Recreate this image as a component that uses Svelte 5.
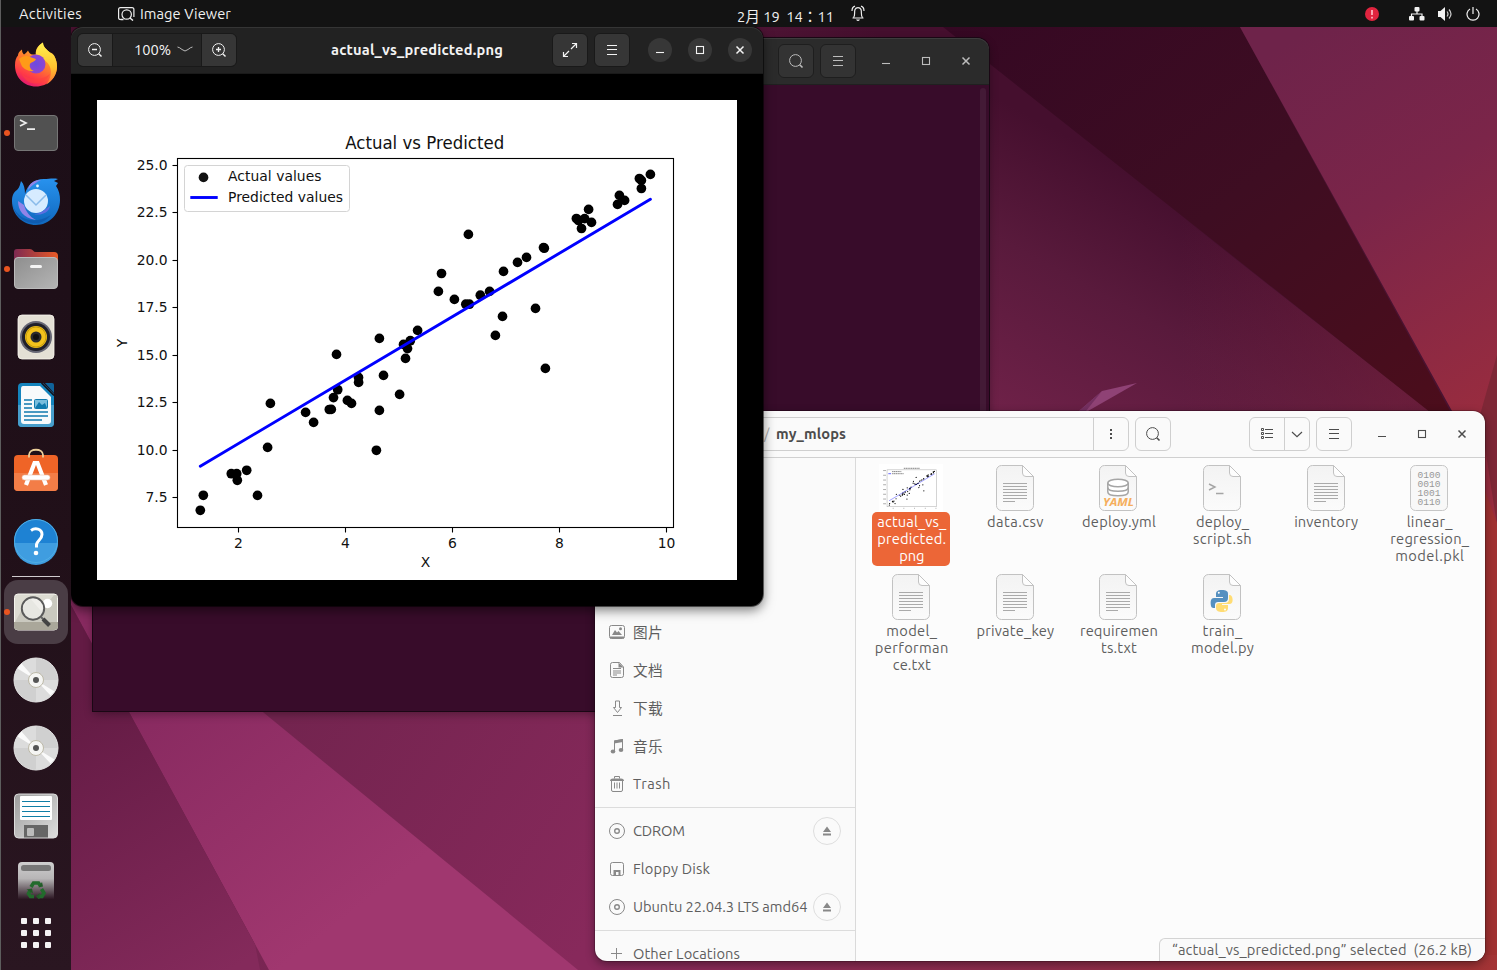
<script>
  const points = [
    [200.3, 510.3], [203.3, 495.3], [231.3, 473.7], [236.7, 473.7], [237.3, 480.3], [246.7, 470.3],
    [257.5, 495.4], [267.6, 447.4], [270.4, 403.4], [305.6, 412.4], [313.6, 422.4], [329.3, 409.5],
    [331.3, 409.4], [333.5, 397.6], [337.7, 389.7], [336.5, 354.4], [347.4, 400.4], [351.5, 403.4],
    [358.5, 377.4], [358.6, 382.4], [376.4, 450.3], [379.4, 410.4], [383.5, 375.4], [399.6, 394.4],
    [405.5, 358.4], [407.5, 348.6], [403.5, 344.4], [379.4, 338.4], [410.3, 340.7], [417.6, 330.4],
    [468.4, 234.4], [441.5, 273.5], [438.4, 291.4], [454.4, 299.4], [465.8, 304.2], [469.4, 304.2],
    [480.3, 295.2], [489.6, 291.4], [503.5, 271.4], [517.5, 262.4], [526.5, 257.4], [543.5, 247.6],
    [544.3, 248.2], [495.4, 335.4], [502.5, 316.4], [535.5, 308.4], [545.4, 368.4], [576.4, 218.5],
    [578.5, 220.5], [584.6, 218.6], [588.6, 209.4], [591.5, 222.4], [581.5, 228.5], [617.5, 204.4],
    [619.4, 195.4], [624.6, 200.4], [639.4, 178.5], [641.4, 180.4], [641.4, 188.5], [650.4, 174.4]
  ];
  const xTicks = [[2, 238.5], [4, 345.5], [6, 452.5], [8, 559.5], [10, 666.5]];
  const yTicks = [
    ['25.0', 165.5], ['22.5', 212.5], ['20.0', 260.5], ['17.5', 307.5],
    ['15.0', 355.5], ['12.5', 402.5], ['10.0', 450.5], ['7.5', 497.5]
  ];

  // Each label line carries its advance width in pixels.
  const files = [
    { kind: 'thumb', selected: true, lines: [['actual_vs_', 69], ['predicted.', 69], ['png', 25]] },
    { kind: 'text', lines: [['data.csv', 57]] },
    { kind: 'yaml', lines: [['deploy.yml', 74]] },
    { kind: 'shell', lines: [['deploy_', 53], ['script.sh', 59]] },
    { kind: 'text', lines: [['inventory', 64]] },
    { kind: 'binary', lines: [['linear_', 46], ['regression_', 79], ['model.pkl', 69]] },
    { kind: 'text', lines: [['model_', 51], ['performan', 74], ['ce.txt', 38]] },
    { kind: 'text', lines: [['private_key', 78]] },
    { kind: 'text', lines: [['requiremen', 78], ['ts.txt', 36]] },
    { kind: 'python', lines: [['train_', 40], ['model.py', 63]] }
  ];

  const places = [
    [
      { icon: 'picture', label: '图片', width: 30, cjk: true },
      { icon: 'document', label: '文档', width: 30, cjk: true },
      { icon: 'download', label: '下载', width: 30, cjk: true },
      { icon: 'music', label: '音乐', width: 30, cjk: true },
      { icon: 'trash', label: 'Trash', width: 38 }
    ],
    [
      { icon: 'disc', label: 'CDROM', width: 52, eject: true },
      { icon: 'floppy', label: 'Floppy Disk', width: 77 },
      { icon: 'disc', label: 'Ubuntu 22.04.3 LTS amd64', width: 174.5, eject: true }
    ],
    [{ icon: 'plus', label: 'Other Locations', width: 107 }]
  ];

  const dockTop = ['firefox', 'terminal', 'thunderbird', 'files', 'music', 'writer', 'software', 'help'];
  const dockBottom = ['viewer', 'disc', 'disc', 'floppy'];
  const running = ['terminal', 'files', 'viewer'];

  // Tracks a label so that it occupies the given width.
  function fit(node, width) {
    const natural = node.getBoundingClientRect().width;
    node.style.letterSpacing = `${(width - natural) / [...node.textContent].length}px`;
  }
</script>

{#snippet chart(small)}
  <rect x="97" y="100" width="640" height="480" fill="#fff" />
  {#each points as [x, y]}
    <circle cx={x} cy={y} r={small ? 6 : 4.85} />
  {/each}
  <path d="M200.3 466.2 650.4 199.3" stroke="#00f" stroke-width={small ? 6 : 2.9} stroke-linecap="round" opacity={small ? 0.6 : 1} />
  <rect x="177.5" y="158.5" width="496" height="369" fill="none" stroke={small ? '#aaa' : '#000'} stroke-width={small ? 5 : 1.1} />
  {#if small}
    <path d="M345 143H504M228 176H321M228 197H343" stroke="#777" stroke-width="9" stroke-dasharray="14 4" />
    <path d="M190 197H218" stroke="#00f" stroke-width="6" />
    {#each yTicks as [, y]}<path d={`M138 ${y}h29`} stroke="#999" stroke-width="8" />{/each}
    {#each xTicks as [, x]}<path d={`M${x - 4} 543h8`} stroke="#999" stroke-width="9" />{/each}
  {:else}
    <g class="plot-text">
      <text class="plot-title" x="424.7" y="149" text-anchor="middle" textLength="159" lengthAdjust="spacingAndGlyphs">Actual vs Predicted</text>
      {#each xTicks as [n, x]}
        <path d={`M${x} 528v4.5`} stroke="#000" stroke-width="1.1" />
        <text {x} y="548" text-anchor="middle">{n}</text>
      {/each}
      {#each yTicks as [n, y]}
        <path d={`M172.5 ${y}h4.5`} stroke="#000" stroke-width="1.1" />
        <text x="167.6" y={y + 4.7} text-anchor="end">{n}</text>
      {/each}
      <text x="425.5" y="567" text-anchor="middle">X</text>
      <text transform="translate(127 343) rotate(-90)" text-anchor="middle">Y</text>
      <rect x="184.5" y="165.5" width="165" height="46" rx="3" fill="#fff" stroke="#d4d4d4" />
      <circle cx="203.5" cy="177.4" r="4.85" />
      <path d="M190.3 197.5h27.4" stroke="#00f" stroke-width="2.9" />
      <text x="228" y="181" textLength="93.5">Actual values</text>
      <text x="228" y="202" textLength="115">Predicted values</text>
    </g>
  {/if}
{/snippet}

{#snippet glyph(name)}
  <svg class="glyph" width="16" height="16" viewBox="0 0 16 16" fill="none" stroke="currentColor">
    {#if name === 'search'}
      <circle cx="7.5" cy="7.5" r="5.9" /><path d="M11.7 11.7 14.5 14.5" stroke-width="1.6" />
    {:else if name === 'zoom-out'}
      <circle cx="7.5" cy="7.5" r="5.9" /><path d="M11.7 11.7 14.5 14.5" stroke-width="1.4" /><path d="M5 7.5h5" stroke-width="1.3" />
    {:else if name === 'zoom-in'}
      <circle cx="7.5" cy="7.5" r="5.9" /><path d="M11.7 11.7 14.5 14.5" stroke-width="1.4" /><path d="M5 7.5h5M7.5 5v5" stroke-width="1.3" />
    {:else if name === 'menu'}
      <path d="M3 3.5h10M3 7.5h10M3 12.5h10" />
    {:else if name === 'expand'}
      <path d="M10 1.5h4.5V6M14.5 1.5 9 7M6 14.5H1.5V10M1.5 14.5 7 9" stroke-width="1.2" />
    {:else if name === 'minimize'}
      <path d="M4 10.5h8" stroke-width="1.1" />
    {:else if name === 'maximize'}
      <rect x="4.5" y="4.5" width="7" height="7" stroke-width="1.1" />
    {:else if name === 'close'}
      <path d="m4.5 4.5 7 7m0-7-7 7" stroke-width="1.5" />
    {:else if name === 'dots'}
      <path d="M8 3v2M8 7v2M8 11v2" stroke-width="2" />
    {:else if name === 'list'}
      <path d="M2.5 2.5h2v2h-2zM2.5 6.5h2v2h-2zM2.5 10.5h2v2h-2zM6 3.5h8M6 7.5h8M6 11.5h8" />
    {:else if name === 'chevron'}
      <path d="m3 6 5 4.6L13 6" stroke-width="1.2" />
    {:else if name === 'picture'}
      <rect x=".5" y="1.5" width="15" height="13" rx="2" /><path d="M1 13.5h14" stroke-width="2" />
      <path d="M3 11 6 6l2 2.5L9.5 7 13 11z" fill="currentColor" stroke="none" /><circle cx="11.5" cy="4.8" r="1.5" fill="currentColor" stroke="none" />
    {:else if name === 'document'}
      <path d="M10.5.5h-7a2 2 0 0 0-2 2v11a2 2 0 0 0 2 2h9a2 2 0 0 0 2-2V5zM4 6.5h8M4 9h8M4 11h8M4 13h4" /><path d="M9.5.5V5.5h5z" fill="currentColor" stroke="none" />
    {:else if name === 'download'}
      <path d="M6.5 1h4v6.5h2L8.5 12.5 4.5 7.5h2zM4 15.500h9" />
    {:else if name === 'music'}
      <path d="M5.5 13V3L13.5 1.500V11.500" /><path d="M5 2.500 14 1v3L5 5.500z" fill="currentColor" stroke="none" />
      <g fill="currentColor" stroke="none"><ellipse cx="4" cy="13.5" rx="2.3" ry="2" /><ellipse cx="12" cy="12" rx="2.3" ry="2" /></g>
    {:else if name === 'trash'}
      <path d="M2.5 5v9a1.500 1.500 0 0 0 1.500 1.500h8a1.500 1.500 0 0 0 1.500-1.500V5M5.500 6.500v6M8 6.500v6M10.500 6.500v6M5.500 2.500v-2h5v2" /><path d="M1 5q0-2.500 3-2.500h8q3 0 3 2.500z" fill="currentColor" stroke="none" />
    {:else if name === 'disc'}
      <circle cx="8" cy="8" r="7.5" /><circle cx="8" cy="8" r="2.3" stroke-width="1.4" />
    {:else if name === 'floppy'}
      <rect x="1.5" y="1.5" width="13" height="13" rx="2" /><path d="M4.500 15V9h7v6H9.500v-4H7v4z" fill="currentColor" stroke="none" />
    {:else if name === 'plus'}
      <path d="M7.5 2v11M2 7.500h11" />
    {:else if name === 'eject'}
      <path d="M8 3.500 12 9H4zM4 10.500h8v2H4z" fill="currentColor" stroke="none" />
    {/if}
  </svg>
{/snippet}

{#snippet windowControls()}
  <span class="control">{@render glyph('minimize')}</span>
  <span class="control">{@render glyph('maximize')}</span>
  <span class="control">{@render glyph('close')}</span>
{/snippet}

{#snippet dockIcon(name)}
  {#if name === 'firefox'}
    <path d="M36 55.500c-12 0-21-9-21-21 0-5 1-8 3-10 0-2 1-4 4-6 0 3 1 4 2 5 2-1 3-3 4-4 1 2 2 4 5 4h3c-1-5 2-9 7-12 0 5 4 7 7 10 1 0 3 1 4 3 2 4 3 7 3 11 0 11-9 20-21 20z" fill="url(#ff)" />
    <path d="M43 11.500c0 5 4 7 7 10l4 3c2 4 3 7 3 11 0 8-5 15-11 18 5-5 7-15 2-21-3-4-7-5-12-7-1-6 2-11 7-14z" fill="url(#ffy)" />
    <circle cx="36" cy="33" r="9.5" fill="url(#ffp)" />
    <path d="M19 28c3-3 8-4 11-2 2 1 4 1 6 2-1 3-5 3-6 5-1 3 1 6 4 7-6 1-12-3-13-7z" fill="#ff9a18" />
    <path d="M21 41c5 8 20 10 29 2-7 13-24 13-29-2z" fill="#ff423d" opacity=".55" />
  {:else if name === 'terminal'}
    <rect x="14.5" y="16.5" width="43" height="35" rx="3.5" fill="#515151" stroke="#767676" />
    <path d="m20 21 6 3-6 3M27 30.200h8" fill="none" stroke="#eee" stroke-width="1.7" />
  {:else if name === 'thunderbird'}
    <g transform="translate(0 1)">
      <path d="M12 33c0-6 2-9 5-11 3-3 3-6 4-9 3 3 4 8 4 13 2-8 8-15 19-15 5 0 9-1 14 0l-4 2 4 2-2 3c3 4 4 9 4 14 0 14-11 25-24 25S12 47 12 33z" fill="url(#tb)" />
      <path d="M13 37c4 15 22 20 38 10-7 8-13 9-19 8-11-1-18-10-19-18z" fill="#0d52a5" opacity=".6" />
      <path d="M18 33c0 9 5 17 18 19-6-3-10-8-12-15M28 22c1-7 6-10 13-10-5 2-9 5-13 10z" fill="#9184e8" />
      <circle cx="36" cy="33" r="12" fill="#d6ebff" /><path d="M26 27 36 37 46 27" fill="none" stroke="#8abbea" stroke-width="1.5" />
      <path d="M50 38c-1 7-10 10-16 8 7 0 11-5 16-8z" fill="#5d6ee0" /><circle cx="37.5" cy="18" r="1.4" fill="#e4f7ff" />
    </g>
  {:else if name === 'files'}
    <path d="M14 21V17q0-3 3-3h13q2 0 3 1.500 1 1.500 3 1.500h18q4 0 4 4v16H14z" fill="url(#folder)" />
    <rect x="14.5" y="22.5" width="43" height="31" rx="3.5" fill="url(#metal)" stroke="#bbb" /><rect x="30" y="30" width="12" height="3" rx="1.5" fill="#f4f4f4" />
  {:else if name === 'music'}
    <rect x="18" y="12" width="36" height="44" rx="4" fill="#e4e0d5" stroke="#faf8f0" stroke-width=".8" /><circle cx="36" cy="34" r="16" fill="#666674" />
    <circle cx="36" cy="34" r="14" fill="#20202a" /><circle cx="36" cy="34" r="11" fill="#f3c21c" /><circle cx="36" cy="34" r="10" fill="none" stroke="#c79d0b" /><circle cx="36" cy="34" r="5.5" fill="#2b2b2e" /><circle cx="36" cy="34" r="3" fill="#111" />
  {:else if name === 'writer'}
    <path d="M22 12h21l11 11v29q0 4-4 4H22q-4 0-4-4V16q0-4 4-4z" fill="#1484bd" /><path d="M18 34h36v18q0 4-4 4H22q-4 0-4-4z" fill="#479ecb" />
    <path d="M45 12h7q2 0 2 2v8z" fill="#10639a" /><path d="M23 15h17l11 11v24q0 3-3 3H24q-3 0-3-3V18q0-3 2-3z" fill="#f8fafb" /><path d="m41.500 12 12.500 12.500" stroke="#151119" stroke-width="1.6" />
    <path d="M24 29h8M24 33h8M24 37h8M24 41h24M24 45h24M24 49h18" stroke="#117aae" stroke-width="1.7" /><rect x="34.5" y="28.5" width="13" height="9" rx="1" fill="#79bddd" stroke="#117aae" /><path d="m35 37 4-6 3 3 3-2 2 5z" fill="#117aae" />
  {:else if name === 'software'}
    <rect x="14" y="16" width="44" height="36" rx="4" fill="#ef6427" /><path d="M14 34h44v14q0 4-4 4H18q-4 0-4-4z" fill="#f37d47" />
    <path d="M29 18.500v-2.500c0-7 14-7 14 0v2.500" fill="none" stroke="#ebcf9a" stroke-width="1.8" />
    <path d="m26 46 8.500-22h3L46 46" fill="none" stroke="#fff" stroke-width="4.2" /><rect x="22" y="36" width="28" height="5" rx="2.5" fill="#fff" stroke="#e9c1aa" stroke-width=".6" />
  {:else if name === 'help'}
    <circle cx="36" cy="34" r="22" fill="#1e82d3" /><path d="M14 36h44a22 22 0 0 1-44 0z" fill="#3f9de0" /><circle cx="36" cy="34" r="21.5" fill="none" stroke="#50aee5" />
    <path d="M31 23.500c4-3 11-2 11 4 0 5-5 6-5.500 10v3" fill="none" stroke="#fff" stroke-width="3" /><circle cx="36" cy="46" r="2.3" fill="#fff" />
  {:else if name === 'viewer'}
    <rect x="14.5" y="16" width="43" height="36" rx="3.5" fill="#dddcd2" stroke="#f5f4ed" /><path d="m15 44 14-25 12 14L54 17h3v30H15z" fill="#c5c4ba" opacity=".8" /><path d="M14 44h44v4q0 4-4 4H18q-4 0-4-4z" fill="#aaa79a" />
    <circle cx="47.5" cy="25.5" r="4.7" fill="#fff" /><circle cx="33" cy="30.5" r="11.2" fill="#fff" fill-opacity=".55" stroke="#5a5a5a" stroke-width="1.9" /><path d="m41 39 3 3" stroke="#666" stroke-width="2" /><path d="m43 41 6.500 6.500" stroke="#444" stroke-width="4" />
  {:else if name === 'disc'}
    <circle cx="36" cy="34" r="22" fill="#d0d0d0" stroke="#e5e5e5" /><path d="M36 34 14 34a22 22 0 0 1 22-22zM36 34h22a22 22 0 0 1-22 22z" fill="#dcdcdc" />
    <path d="M36 34 17.500 22.500l4-5zM36 34l18.500 11.500-4 4z" fill="#fafafa" /><circle cx="36" cy="34" r="7.5" fill="#f5f5f3" stroke="#bdb9a8" /><circle cx="36" cy="34" r="3" fill="#555" />
  {:else if name === 'floppy'}
    <rect x="14.5" y="12" width="43" height="44" rx="4" fill="url(#metal2)" stroke="#ddd" /><rect x="20" y="14" width="32" height="24" rx="1" fill="#fff" />
    <path d="M22 19.500h28M22 24.500h28M22 29.500h28M22 34.500h28" stroke="#0f7ea6" /><path d="M24 43h24v12.500H24z" fill="#666" /><rect x="27" y="46" width="7" height="8" rx="1" fill="#bbb" />
  {/if}
{/snippet}

<main class="desktop">
  <svg class="wallpaper" width="1497" height="970" viewBox="0 0 1497 970">
    <defs>
      <linearGradient id="w1" gradientUnits="userSpaceOnUse" x1="1130" y1="170" x2="1000" y2="410"><stop stop-color="#450f2e" /><stop offset=".45" stop-color="#591a3c" /><stop offset="1" stop-color="#6e2148" /></linearGradient>
      <linearGradient id="w1r" gradientUnits="userSpaceOnUse" x1="1180" y1="400" x2="1400" y2="400"><stop stop-color="#7a2341" stop-opacity="0" /><stop offset="1" stop-color="#7c233e" /></linearGradient>
      <linearGradient id="w2" x1="0" y1="0" x2="1" y2="1"><stop stop-color="#350823" /><stop offset=".5" stop-color="#3e0d22" /><stop offset="1" stop-color="#4c0d1b" /></linearGradient>
      <linearGradient id="w3" gradientUnits="userSpaceOnUse" x1="1260" y1="60" x2="1480" y2="410"><stop stop-color="#6e234a" /><stop offset=".45" stop-color="#7b2549" /><stop offset="1" stop-color="#982c3f" /></linearGradient>
      <linearGradient id="w4" gradientUnits="userSpaceOnUse" x1="71" y1="700" x2="230" y2="970"><stop stop-color="#631b44" /><stop offset="1" stop-color="#842a5b" /></linearGradient>
      <linearGradient id="w5" gradientUnits="userSpaceOnUse" x1="150" y1="700" x2="330" y2="930"><stop stop-color="#882a60" /><stop offset="1" stop-color="#a0376f" /></linearGradient>
      <linearGradient id="w6" gradientUnits="userSpaceOnUse" x1="290" y1="711" x2="600" y2="920"><stop stop-color="#73244f" /><stop offset="1" stop-color="#87295b" /></linearGradient>
      <linearGradient id="w7" gradientUnits="userSpaceOnUse" x1="590" y1="0" x2="1497" y2="0"><stop stop-color="#87295b" /><stop offset=".5" stop-color="#8e2d4c" /><stop offset="1" stop-color="#a33435" /></linearGradient>
    </defs>
    <rect width="1497" height="970" fill="#4a1231" />
    <path d="M760 27h185l483 383v60H760z" fill="url(#w1)" /><path d="M1400 388 1428 410v10H1100V153z" fill="url(#w1r)" opacity=".55" />
    <path d="M943 27h297l215 393h-15z" fill="url(#w2)" />
    <path d="M1240 27h257v500l-40-107z" fill="url(#w3)" />
    <path d="M1497 355 1480 415l17 110z" fill="#7e2736" /><path d="m1484 488 13 35v447h-30V470z" fill="#a03131" />
    <path d="m1079 411 23-20 35-8-49 28z" fill="#8f4275" /><path d="m1079 411 23-20-16 20z" fill="#753061" />
    <path d="M71 605 269 970H71z" fill="url(#w4)" /><path d="M200 660h400v310H260z" fill="url(#w6)" />
    <path d="M71 555 578 970H269L71 605z" fill="url(#w5)" />
    <path d="M578 955h919v15H578z" fill="url(#w7)" />
  </svg>

  <section class="window terminal">
    <header>
      <span class="button">{@render glyph('search')}</span>
      <span class="button">{@render glyph('menu')}</span>
      <div class="controls">{@render windowControls()}</div>
    </header>
    <div class="screen"><i></i></div>
  </section>

  <section class="window manager">
    <header>
      <div class="path"><span class="slash">/</span><b use:fit={70}>my_mlops</b><span class="dots">{@render glyph('dots')}</span></div>
      <span class="button">{@render glyph('search')}</span>
      <div class="view"><span>{@render glyph('list')}</span><span class="drop">{@render glyph('chevron')}</span></div>
      <span class="button">{@render glyph('menu')}</span>
      <div class="controls">{@render windowControls()}</div>
    </header>
    <div class="content">
      <aside>
        {#each places as group}
          <ul>
            {#each group as place}
              <li>
                {@render glyph(place.icon)}
                <span class="name" class:cjk={place.cjk} use:fit={place.width}>{place.label}</span>
                {#if place.eject}<span class="eject">{@render glyph('eject')}</span>{/if}
              </li>
            {/each}
          </ul>
        {/each}
      </aside>
      <div class="grid">
        {#each files as file}
          <div class="file" class:selected={file.selected}>
            {#if file.kind === 'thumb'}
              <svg width="64" height="48" viewBox="97 100 640 480">{@render chart(true)}</svg>
            {:else}
              <svg width="38" height="48" viewBox="0 0 38 48">
                {#if file.kind === 'binary'}
                  <rect x=".5" y="1.5" width="37" height="45" rx="5" fill="#f8f8f8" stroke="#c6c6c6" />
                  <g class="bits">
                    {#each ['0100', '0010', '1001', '0110'] as bits, i}
                      <text x="7.5" y={14 + i * 9} textLength="23" lengthAdjust="spacingAndGlyphs">{bits}</text>
                    {/each}
                  </g>
                {:else}
                  <path d="M26.500 1.500H5.500a5 5 0 0 0-5 5v35a5 5 0 0 0 5 5h27a5 5 0 0 0 5-5V12.500z" fill="url(#paper)" stroke="#c2c2c2" />
                  <path d="M26.500 1.500V9a3.500 3.500 0 0 0 3.500 3.500h7.500z" fill="#fdfdfd" stroke="#c2c2c2" />
                  {#if file.kind === 'text'}
                    <path d="M7 19.500h24M7 22.500h24M7 25.500h24M7 28.500h24M7 31.500h24M7 34.500h24M7 37.500h12" stroke="#aaa" />
                  {:else if file.kind === 'shell'}
                    <path d="m6 20 6 3-6 3M13 29.500h7.500" fill="none" stroke="#a5a5a5" stroke-width="1.4" />
                  {:else if file.kind === 'yaml'}
                    <g fill="#fff" stroke="#a5a5a5" stroke-width="1.5"><path d="M8.800 19v9c0 5 20.400 5 20.400 0v-9" /><path d="M8.800 23.500c0 5 20.400 5 20.400 0" fill="none" /><ellipse cx="19" cy="19" rx="10.2" ry="3.8" /></g>
                    <text class="yaml" x="4" y="42" textLength="31" lengthAdjust="spacingAndGlyphs">YAML</text>
                  {:else}
                    <path d="M19 17c-5 0-6 2-6 4v3h7v1H11c-3 0-4 3-3 8 .5 2 2 2 4 2v-3q0-3 3-3h6q4 0 4-4v-4c0-3-2-4-6-4z" fill="#5590c0" />
                    <path d="M26 22v4q0 4-4 4h-6q-3 0-3 3v2c0 3 3 4 6 4 4 0 6-1 6-4v-3h-6v-1h8c4 0 3-9 0-9z" fill="#ffdc73" /><circle cx="15.8" cy="19.7" r="1" fill="#fff" /><circle cx="22" cy="36.5" r="1" fill="#fff" />
                  {/if}
                {/if}
              </svg>
            {/if}
            <div class="label">{#each file.lines as [text, width]}<div><span use:fit={width}>{text}</span></div>{/each}</div>
          </div>
        {/each}
      </div>
      <div class="status"><span use:fit={300}>“actual_vs_predicted.png” selected&nbsp; (26.2 kB)</span></div>
    </div>
  </section>

  <section class="window image-viewer">
    <header>
      <div class="zoom"><span>{@render glyph('zoom-out')}</span><span class="level"><span use:fit={37}>100%</span><svg width="16" height="8" viewBox="0 0 16 8" fill="none" stroke="#bbb"><path d="M.5 1q2 .3 4.500 2.500 3 3 6 0Q13.500 1.300 15.500 1" /></svg></span><span>{@render glyph('zoom-in')}</span></div>
      <b class="title"><span use:fit={172}>actual_vs_predicted.png</span></b>
      <span class="button">{@render glyph('expand')}</span>
      <span class="button">{@render glyph('menu')}</span>
      <div class="controls">{@render windowControls()}</div>
    </header>
    <div class="canvas"><svg width="640" height="480" viewBox="97 100 640 480">{@render chart(false)}</svg></div>
  </section>

  <nav class="dock">
    <svg width="0" height="0" class="defs">
      <defs>
        <linearGradient id="ff" x1=".8" y1="0" x2=".3" y2="1"><stop stop-color="#ffd53a" /><stop offset=".45" stop-color="#ff832b" /><stop offset=".8" stop-color="#ff3a48" /><stop offset="1" stop-color="#df1673" /></linearGradient>
        <linearGradient id="ffy" x1="0" y1="0" x2="0" y2="1"><stop stop-color="#fff150" /><stop offset=".6" stop-color="#ffc22e" /><stop offset="1" stop-color="#ff7435" /></linearGradient>
        <radialGradient id="ffp"><stop stop-color="#6a4be0" /><stop offset="1" stop-color="#9145cf" /></radialGradient>
        <linearGradient id="tb" x1="0" y1="0" x2="0" y2="1"><stop stop-color="#2892ee" /><stop offset="1" stop-color="#1068be" /></linearGradient>
        <linearGradient id="folder"><stop stop-color="#7d2951" /><stop offset="1" stop-color="#e95a26" /></linearGradient>
        <linearGradient id="metal" x1="0" y1="0" x2="1" y2="1"><stop stop-color="#8e8e8e" /><stop offset="1" stop-color="#b5b5b5" /></linearGradient>
        <linearGradient id="metal2" x1="0" y1="0" x2="1" y2="1"><stop stop-color="#9c9c9c" /><stop offset="1" stop-color="#dedede" /></linearGradient>
        <linearGradient id="bin" x1="0" y1="0" x2="0" y2="1"><stop stop-color="#cfcfcf" /><stop offset=".45" stop-color="#b7b5b6" /><stop offset="1" stop-color="#2c1723" /></linearGradient>
        <linearGradient id="paper" x1="0" y1="0" x2="0" y2="1"><stop stop-color="#f3f3f3" /><stop offset="1" stop-color="#fbfbfb" /></linearGradient>
      </defs>
    </svg>
    {#each dockTop as name}
      <span class="slot">
        <svg width="70" height="68" viewBox="1 0 70 68">{#if running.includes(name)}<circle cx="7" cy="34" r="3" fill="#e95420" />{/if}{@render dockIcon(name)}</svg>
      </span>
    {/each}
    <hr />
    {#each dockBottom as name}
      <span class="slot" class:active={name === 'viewer'}>
        <svg width="70" height="68" viewBox="1 0 70 68">{#if running.includes(name)}<circle cx="7" cy="34" r="3" fill="#e95420" />{/if}{@render dockIcon(name)}</svg>
      </span>
    {/each}
    <svg width="70" height="49" viewBox="1 0 70 49">
      <path d="M18 49V16q0-4 4-4h28q4 0 4 4v33z" fill="url(#bin)" /><rect x="21" y="15" width="30" height="6" rx="2.5" fill="#777" />
      <g fill="none" stroke="#226b2c" stroke-width="3.6"><path d="m31 37 2.500-4h5l2 3" /><path d="m41.500 39 2.500 4-2 3.500h-3" /><path d="M34 46.500h-3.500l-2-3 1.500-3" /></g>
      <path d="m38.500 37.500 4.500-1-1-4.500zM39.500 43v7l-3.500-3.500zM26.500 39.500l5.500-1 1 5z" fill="#225b27" />
    </svg>
    <svg width="70" height="68" viewBox="1 0 70 68">
      {#each [22, 34, 46] as y}{#each [24, 36, 48] as x}<rect x={x - 3} y={y - 3} width="6" height="6" rx="1" fill="#f4f2f3" />{/each}{/each}
    </svg>
  </nav>

  <header class="topbar">
    <span class="activities"><span use:fit={63}>Activities</span></span>
    <svg width="17" height="14" viewBox="0 0 17 14" fill="none" stroke="#eee" stroke-width="1.2"><path d="M3 12.500H2.500Q.600 12.500.600 10.500v-8Q.600.600 2.500.600h11.500q1.900 0 1.900 1.900v7.500" /><circle cx="8.7" cy="7.5" r="4.7" /><path d="m12 11 3 2.500M2.500 12.500h3" stroke-width="1.5" /></svg>
    <span class="app"><span use:fit={91}>Image Viewer</span></span>
    <span class="clock"><span use:fit={97}>2月 19&nbsp; 14<span class="colon">：</span>11</span></span>
    <svg width="14" height="17" viewBox="0 0 14 17" fill="none" stroke="#eee" stroke-width="1.2"><path d="M1.500 13h11M2.500 12.500c2-2 .5-5.500 1.500-8 1-2.500 5-2.500 6 0s-.5 6 1.500 8M1 6Q1 2 4 1.200M13 6q0-4-3-4.800" /><path d="M5 14.500h4q-2 3-4 0z" fill="#eee" stroke="none" /></svg>
    <div class="indicators">
      <svg width="14" height="14" viewBox="0 0 14 14"><circle cx="7" cy="7" r="7" fill="#e0243f" /><path d="M7 3v5M7 9.800v1.700" stroke="#ffc5ce" stroke-width="1.6" /></svg>
      <svg class="net" width="16" height="14" viewBox="0 0 16 14" fill="#f2f2f2"><rect x="5.5" width="5" height="4.5" rx="1" /><rect y="9" width="5" height="4.5" rx="1" /><rect x="10.5" y="9" width="5" height="4.5" rx="1" /><path d="M8 4v3M2.500 9V7h10.500v2" fill="none" stroke="#f2f2f2" stroke-width="1.2" /></svg>
      <svg class="vol" width="15" height="14" viewBox="0 0 15 14"><path d="M0 4h2.500L7 0v14L2.500 10H0z" fill="#f2f2f2" /><path d="M9 4.500q2 2.500 0 5M11 2.500q4 4.500 0 9" fill="none" stroke="#ccc" stroke-width="1.2" /></svg>
      <svg class="power" width="14" height="14" viewBox="0 0 14 14" fill="none" stroke="#f2f2f2" stroke-width="1.2"><path d="M4 2a6 6 0 1 0 6 0M7 0v7" /></svg>
    </div>
  </header>
  <div class="edge"></div>
</main>

<style>
  :global(body) { margin: 0; overflow: hidden; }
  .desktop { position: relative; width: 1497px; height: 970px; overflow: hidden; font: 14.67px/17px Ubuntu, 'Noto Sans', 'Noto Sans CJK SC', sans-serif; color: #5e5e5e; white-space: nowrap; }
  svg { display: block; flex: none; }
  .wallpaper { position: absolute; inset: 0; }
  .edge { position: absolute; left: 0; top: 0; width: 1px; height: 970px; background: #5d5d5d; }

  .topbar { position: absolute; left: 0; top: 0; box-sizing: border-box; width: 1497px; height: 27px; padding-left: 19px; display: flex; align-items: center; background: #131313; color: #f0f0f0; }
  .activities { width: 99px; padding-bottom: 1px; }
  .app { margin-left: 5px; padding-bottom: 1px; width: 597px; }
  .clock { width: 114px; padding-top: 5px; }
  .colon { font-family: 'Noto Sans CJK TC', sans-serif; line-height: 1; }
  .indicators { margin-left: 500px; display: flex; align-items: center; }
  .net { margin-left: 30px; }
  .vol { margin-left: 13px; }
  .power { margin-left: 13px; }

  .dock { position: absolute; left: 1px; top: 27px; box-sizing: border-box; width: 70px; height: 943px; padding-top: 4px; display: flex; flex-direction: column; background: linear-gradient(#1b0e17, #211019 55%, #2a1621); }
  .defs { position: absolute; }
  .slot { height: 68px; flex: none; }
  .dock hr { width: 48px; height: 1px; margin: 1px auto; border: 0; background: #d0cbce; flex: none; }
  .active { background: #4a3d45; width: 64px; height: 64px; margin: 2px 3px; border-radius: 14px; }
  .active svg { margin: -2px -3px; }

  .window { position: absolute; display: flex; flex-direction: column; }
  .window > header { display: flex; align-items: center; box-sizing: border-box; flex: none; }
  .button { box-sizing: border-box; display: grid; place-items: center; width: 36px; height: 34px; border: 1px solid; border-radius: 6px; flex: none; }
  .controls { display: flex; flex: none; gap: 16px; }
  .control { display: grid; place-items: center; width: 24px; height: 24px; border-radius: 50%; }

  .terminal { left: 93px; top: 38px; width: 896px; height: 673px; background: #380c2a; border-radius: 12px 12px 0 0; box-shadow: 0 0 0 1px #1a0714, 0 3px 10px #0005; color: #bdbdbd; }
  .terminal > header { height: 47px; justify-content: flex-end; gap: 6px; padding-right: 11px; background: #2b2b2b; border-radius: 12px 12px 0 0; box-shadow: inset 0 1px #3c3c3c; border-bottom: 1px solid #202020; }
  .terminal .button { background: #333; border-color: #1e1e1e; }
  .terminal .controls { margin-left: 12px; }
  .screen { flex: 1; display: flex; justify-content: flex-end; padding: 3px 3px 4px 0; }
  .screen i { width: 6px; border-radius: 3px; background: #431a36; }

  .image-viewer { left: 71px; top: 27px; width: 692px; height: 579px; background: #000; border-radius: 12px; box-shadow: 0 0 0 1px #0008, 0 4px 12px #0008; color: #f3f3f3; }
  .image-viewer > header { height: 47px; padding: 0 11px 0 6px; background: #222; border-radius: 12px 12px 0 0; box-shadow: inset 0 1px #353535; border-bottom: 1px solid #1a1a1a; }
  .image-viewer .button { background: #363636; border-color: #191919; margin-right: 6px; }
  .zoom { box-sizing: border-box; width: 160px; height: 34px; display: grid; grid-template-columns: 34px 88px 34px; gap: 1px; border: 1px solid #191919; border-radius: 6px; background: #191919; overflow: hidden; flex: none; }
  .zoom > span { display: grid; place-items: center; background: #363636; }
  .zoom > .level { display: flex; align-items: center; gap: 6px; background: #252525; padding-left: 21px; }
  .title { width: 314px; margin: 0 -22px 0 23px; padding-bottom: 2px; text-align: center; font-size: 14.67px; flex: none; }
  .level span { padding-bottom: 1px; }
  .title span, .label span { display: inline-block; }
  .image-viewer .controls { margin-left: 12px; }
  .image-viewer .control { background: #373737; }
  .canvas { padding: 26px; }
  .plot-text { font: 13.89px 'DejaVu Sans', sans-serif; fill: #111; }
  .plot-title { font-size: 17.4px; }

  .manager { left: 595px; top: 411px; width: 890px; height: 550px; background: #fafafa; border-radius: 12px; overflow: hidden; box-shadow: 0 0 0 1px #0003, 0 3px 10px #0006; }
  .manager > header { height: 47px; padding: 0 11px 0 160px; border-bottom: 1px solid #d0d0d0; color: #4c4c4c; }
  .manager .button, .path, .view { border: 1px solid #cfcfcf; }
  .path { box-sizing: border-box; width: 374px; height: 34px; margin-right: 6px; display: flex; align-items: center; border-radius: 6px; flex: none; }
  .path b { padding-bottom: 2px; }
  .slash { width: 16px; margin: 0 -4px 0 8px; padding-bottom: 2px; color: #aaa; flex: none; }
  .dots { margin-left: auto; width: 34px; height: 32px; display: grid; place-items: center; border-left: 1px solid #cfcfcf; }
  .view { box-sizing: border-box; display: flex; width: 61px; height: 34px; margin: 0 6px 0 78px; border-radius: 6px; flex: none; }
  .view span { width: 34px; display: grid; place-items: center; }
  .view .drop { width: 24px; border-left: 1px solid #cfcfcf; }
  .manager .controls { margin-left: 18px; }
  .content { position: relative; display: flex; flex: 1; min-height: 0; }
  aside { box-sizing: border-box; width: 261px; padding-top: 155px; border-right: 1px solid #dadada; overflow: hidden; flex: none; }
  ul { margin: 0; padding: 0 14px; list-style: none; }
  ul + ul { margin-top: 4px; padding-top: 4px; border-top: 1px solid #dcdcdc; }
  li { display: flex; align-items: center; height: 38px; }
  li > :global(.glyph) { color: #898989; }
  .name { margin-left: 8px; padding-bottom: 2px; }
  .name.cjk { padding-bottom: 0; }
  .eject { box-sizing: border-box; width: 28px; height: 28px; margin-left: auto; display: grid; place-items: center; border: 1px solid #dedede; border-radius: 50%; color: #888; }
  .grid { flex: 1; display: grid; grid-template-columns: repeat(6, 103.6px); grid-template-rows: 109px 109px; padding: 6px 0 0 3.5px; background: #fcfcfc; align-content: start; }
  .file { display: flex; flex-direction: column; align-items: center; }
  .label { box-sizing: border-box; padding: 1px 3.5px 2px 4.5px; text-align: center; border-radius: 5px; }
  .selected .label { width: 78px; background: #ec6637; color: #fff; }
  .bits { font: 9.5px 'Liberation Mono', monospace; fill: #999; }
  .yaml { font: italic bold 11px 'Open Sans', sans-serif; fill: #f5ae5c; }
  .status { position: absolute; right: 0; bottom: 0; box-sizing: border-box; width: 326px; height: 23px; padding: 2px 0 0 12px; background: #fafafa; border: solid #d4d4d4; border-width: 1px 0 0 1px; border-radius: 6px 0 0; }
</style>
